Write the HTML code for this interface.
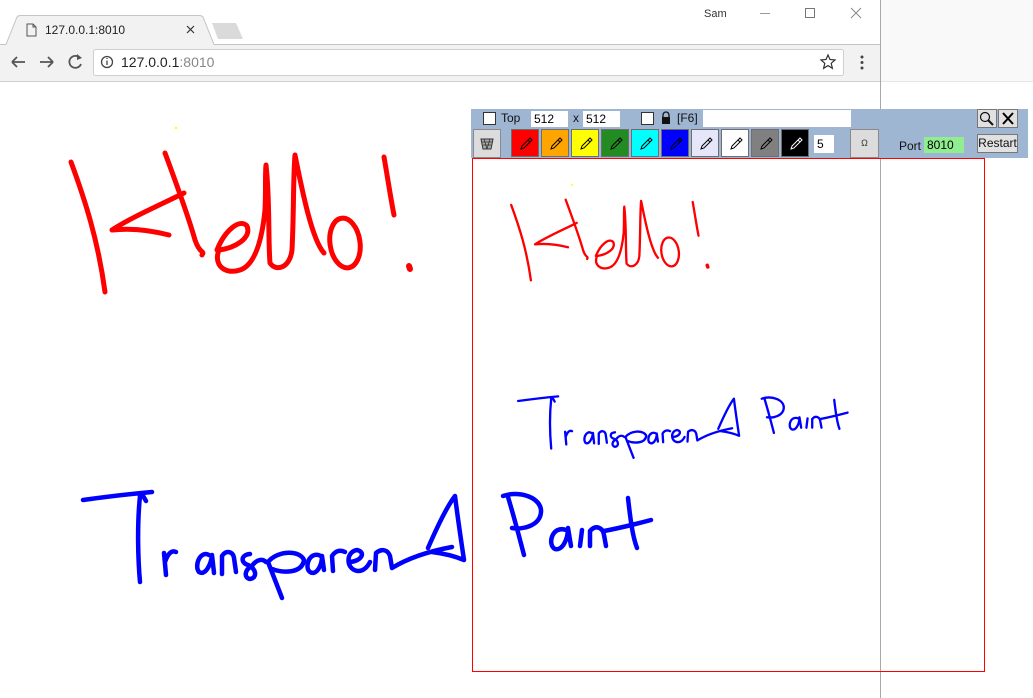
<!DOCTYPE html>
<html><head><meta charset="utf-8"><style>
*{box-sizing:border-box;margin:0;padding:0}
body{width:1033px;height:698px;position:relative;overflow:hidden;background:#fff;font-family:"Liberation Sans",Arial,sans-serif}
.a{position:absolute}
.sw{position:absolute;top:129px;width:28px;height:28px;border:1px solid #6e6e6e}
.sw svg{position:absolute;left:6px;top:6px}
.inp{position:absolute;background:#fff;font-size:12px;padding:1px 3px;line-height:14px}
</style></head><body>
<div class="a" style="left:881px;top:0;width:152px;height:82px;background:#f9f9f9;border-bottom:1px solid #e6e6e6"></div>
<div class="a" style="left:0;top:0;width:881px;height:698px;border-right:1px solid #a8a8a8;background:#fff"></div>
<div class="a" style="left:0;top:44px;width:880px;height:38px;background:#f2f2f2;border-bottom:1px solid #d0d0d0"></div>
<svg class="a" style="left:0;top:0" width="880" height="46">
<path d="M0,44.5 L6,44.5 L17,17 Q18,15.5 21,15.5 L199,15.5 Q202,15.5 203,17 L214,44.5 L880,44.5" fill="#f2f2f2" stroke="#c4c4c4"/>
<rect x="5" y="45" width="212" height="2" fill="#f2f2f2"/>
<path d="M212,23 L236,23 L243,39 L218,39 Z" fill="#dadada"/>
<path d="M27,24 h6 l3,3 v9 h-9 z M33,24 v3 h3" fill="none" stroke="#555" stroke-width="1"/>
<path d="M187,26 l7,7 M194,26 l-7,7" stroke="#333" stroke-width="1.2"/>
<path d="M760,13.5 h10" stroke="#999"/>
<rect x="805.5" y="8.5" width="9" height="9" fill="none" stroke="#777"/>
<path d="M851,8 l10,10 M861,8 l-10,10" stroke="#888"/>
</svg>
<div class="a" style="left:45px;top:23px;font-size:12px;color:#222">127.0.0.1:8010</div>
<div class="a" style="left:704px;top:8px;font-size:11px;color:#333">Sam</div>
<svg class="a" style="left:0;top:44px" width="880" height="38">
<path d="M12,18 h13 M12,18 l5,-5 M12,18 l5,5" stroke="#555" stroke-width="1.8" fill="none"/>
<path d="M53,18 h-13 M53,18 l-5,-5 M53,18 l-5,5" stroke="#555" stroke-width="1.8" fill="none"/>
<path d="M80,14 A6,6 0 1 0 81,20" stroke="#555" stroke-width="1.8" fill="none"/><path d="M77,10 l5,4 l-5,2" fill="#555"/>
<rect x="93.5" y="5.5" width="750" height="26" rx="2" fill="#fff" stroke="#cfcfcf"/>
<circle cx="107" cy="18" r="5.5" fill="none" stroke="#444" stroke-width="1.3"/><path d="M107,16.5v4.5M107,14v1" stroke="#444" stroke-width="1.3"/>
<path d="M828,11 l2,4.5 5,.5 -3.8,3.3 1.2,5 -4.4,-2.7 -4.4,2.7 1.2,-5 -3.8,-3.3 5,-.5z" fill="none" stroke="#333" stroke-width="1.2"/>
<circle cx="862" cy="13" r="1.5" fill="#444"/><circle cx="862" cy="18.5" r="1.5" fill="#444"/><circle cx="862" cy="24" r="1.5" fill="#444"/>
</svg>
<div class="a" style="left:121px;top:54px;font-size:14px;color:#222">127.0.0.1<span style="color:#888">:8010</span></div>

<svg class="a" style="left:0;top:0" width="1033" height="698">
<defs>
<g id="hello" fill="none" stroke="#f00" stroke-linecap="round" stroke-linejoin="round">
<path d="M71,162 C85,200 98,240 105,292"/>
<path d="M184,193 C160,205 130,218 112,230 C130,228 150,230 169,235"/>
<path d="M165,153 C175,180 188,215 195,240 C200,255 205,250 202,255"/>
<path d="M217,250 C225,230 240,218 247,226 C252,238 235,248 219,250 C213,265 225,275 240,270 C255,265 262,240 265,210 C266,190 265,175 266,165 C270,200 268,240 270,263 C276,272 290,268 292,250 C294,210 293,180 295,155 C302,190 312,240 324,253"/>
<ellipse cx="345" cy="243" rx="15" ry="25" transform="rotate(-8 345 243)"/>
<path d="M384,157 C388,180 391,200 394,215"/>
<path d="M409,266 l1,3" stroke-width="6"/>
</g>
<g id="tp" fill="none" stroke="#00f" stroke-linecap="round" stroke-linejoin="round">
<path d="M83,500 C105,497 130,494 152,492 M142,494 L146,501 M140,496 C137,525 138,560 140,582"/>
<path d="M164,553 L166,575 M165,562 C168,553 172,550 176,552"/>
<path d="M209,555 C200,550 194,566 199,572 C205,576 211,565 212,555 L214,573"/>
<path d="M222,574 L222,556 C226,550 233,551 234,558 L236,572"/>
<path d="M250,554 C240,555 241,563 248,565 C256,568 258,578 250,579 C244,578 244,570 252,566 C256,560 262,558 266,562"/>
<path d="M268,562 L282,598 M268,562 C278,550 300,550 304,560 C302,574 282,573 272,569"/>
<path d="M321,556 C309,550 304,568 310,572 C316,576 322,566 322,556 L324,570"/>
<path d="M333,571 L332,556 C336,550 341,550 345,552"/>
<path d="M350,562 C362,561 366,552 357,550 C345,552 346,570 358,571 C364,571 368,566 370,562"/>
<path d="M375,570 L376,553 C382,548 388,550 390,556 L392,568 C405,560 425,552 452,547"/>
<path d="M428,548 C438,525 448,505 455,496 C458,520 461,540 464,560 C452,555 440,553 432,552"/>
<path d="M508,497 C515,520 520,540 524,555 M503,496 C520,490 542,498 541,512 C540,526 522,530 512,528"/>
<path d="M566,530 C552,525 547,545 555,549 C562,551 568,540 568,528 L571,546"/>
<path d="M580,546 L582,530"/>
<path d="M590,546 L590,531 C596,524 603,528 604,535 L606,546"/>
<path d="M604,531 C620,528 636,524 651,520 M628,498 C630,515 632,535 637,548"/>
</g>
</defs>
<use href="#hello" stroke-width="5"/>
<use href="#tp" stroke-width="4.5"/>
<circle cx="176" cy="128" r="1.2" fill="#ff0"/>
<g transform="translate(470 111) scale(0.58)">
<use href="#hello" stroke-width="4"/>
<use href="#tp" stroke-width="4"/>
</g>
<circle cx="572" cy="185" r="1" fill="#ff0"/>
</svg>

<div class="a" style="left:471px;top:109px;width:557px;height:49px;background:#9fb6d3"></div>
<div class="a" style="left:472px;top:158px;width:513px;height:514px;border:1px solid #f00"></div>
<div class="a" style="left:483px;top:112px;width:13px;height:13px;background:#fff;border:1px solid #333"></div>
<div class="a" style="left:501px;top:111px;font-size:12px;color:#111">Top</div>
<div class="inp" style="left:531px;top:111px;width:37px;height:16px">512</div>
<div class="a" style="left:573px;top:111px;font-size:12px;color:#111">x</div>
<div class="inp" style="left:583px;top:111px;width:37px;height:16px">512</div>
<div class="a" style="left:641px;top:112px;width:13px;height:13px;background:#fff;border:1px solid #333"></div>
<svg class="a" style="left:660px;top:110px" width="12" height="16"><path d="M3,7 V5 a3,3 0 0 1 6,0 V7" fill="none" stroke="#111" stroke-width="1.3"/><rect x="2" y="7" width="8" height="7" fill="#111"/></svg>
<div class="a" style="left:677px;top:111px;font-size:12px;color:#111">[F6]</div>
<div class="inp" style="left:703px;top:110px;width:148px;height:17px"></div>
<div class="a" style="left:977px;top:109px;width:20px;height:19px;background:#e1e1e1;border:1px solid #777"></div>
<svg class="a" style="left:977px;top:109px" width="20" height="19"><circle cx="8" cy="8" r="4.5" fill="none" stroke="#111" stroke-width="1.2"/><path d="M11,11 l5,5" stroke="#111" stroke-width="2"/></svg>
<div class="a" style="left:998px;top:109px;width:20px;height:19px;background:#e1e1e1;border:1px solid #777"></div>
<svg class="a" style="left:998px;top:109px" width="20" height="19"><path d="M5,4 l10,11 M15,4 l-10,11" stroke="#000" stroke-width="2"/></svg>

<div class="a" style="left:473px;top:129px;width:28px;height:29px;background:#dcdcdc;border:1px solid #8a8a8a"></div>
<svg class="a" style="left:479px;top:136px" width="16" height="16"><path d="M2,3 h12 l-2,10 h-8 z" fill="#aaa" stroke="#333"/><path d="M3,6 l10,0 M4,9 h8 M5,3 l3,10 M11,3 l-3,10" stroke="#333" stroke-width="0.8"/></svg>
<div class="sw" style="left:511px;background:#f00"><svg width="16" height="16"><path d="M3,13 l1,-3 8,-8 2,2 -8,8 z M10,4 l2,2" fill="none" stroke="#000" stroke-width="1"/></svg></div>
<div class="sw" style="left:541px;background:#ffa500"><svg width="16" height="16"><path d="M3,13 l1,-3 8,-8 2,2 -8,8 z M10,4 l2,2" fill="none" stroke="#000" stroke-width="1"/></svg></div>
<div class="sw" style="left:571px;background:#ff0"><svg width="16" height="16"><path d="M3,13 l1,-3 8,-8 2,2 -8,8 z M10,4 l2,2" fill="none" stroke="#000" stroke-width="1"/></svg></div>
<div class="sw" style="left:601px;background:#228b22"><svg width="16" height="16"><path d="M3,13 l1,-3 8,-8 2,2 -8,8 z M10,4 l2,2" fill="none" stroke="#000" stroke-width="1"/></svg></div>
<div class="sw" style="left:631px;background:#0ff"><svg width="16" height="16"><path d="M3,13 l1,-3 8,-8 2,2 -8,8 z M10,4 l2,2" fill="none" stroke="#000" stroke-width="1"/></svg></div>
<div class="sw" style="left:661px;background:#00f"><svg width="16" height="16"><path d="M3,13 l1,-3 8,-8 2,2 -8,8 z M10,4 l2,2" fill="none" stroke="#000" stroke-width="1"/></svg></div>
<div class="sw" style="left:691px;background:#e6e6fa"><svg width="16" height="16"><path d="M3,13 l1,-3 8,-8 2,2 -8,8 z M10,4 l2,2" fill="none" stroke="#000" stroke-width="1"/></svg></div>
<div class="sw" style="left:721px;background:#fff"><svg width="16" height="16"><path d="M3,13 l1,-3 8,-8 2,2 -8,8 z M10,4 l2,2" fill="none" stroke="#000" stroke-width="1"/></svg></div>
<div class="sw" style="left:751px;background:#808080"><svg width="16" height="16"><path d="M3,13 l1,-3 8,-8 2,2 -8,8 z M10,4 l2,2" fill="none" stroke="#000" stroke-width="1"/></svg></div>
<div class="sw" style="left:781px;background:#000"><svg width="16" height="16"><path d="M3,13 l1,-3 8,-8 2,2 -8,8 z M10,4 l2,2" fill="none" stroke="#fff" stroke-width="1"/></svg></div>
<div class="inp" style="left:814px;top:135px;width:20px;height:18px;padding-top:2px">5</div>
<div class="a" style="left:850px;top:129px;width:29px;height:29px;background:#dcdcdc;border:1px solid #8a8a8a;font-size:9px;text-align:center;line-height:27px;color:#333">&#937;</div>
<div class="a" style="left:899px;top:139px;font-size:12px;color:#111">Port</div>
<div class="inp" style="left:924px;top:137px;width:40px;height:16px;background:#90ee90">8010</div>
<div class="a" style="left:977px;top:134px;width:41px;height:19px;background:#e1e1e1;border:1px solid #777;font-size:12px;text-align:center;line-height:17px;color:#111">Restart</div>
</body></html>
